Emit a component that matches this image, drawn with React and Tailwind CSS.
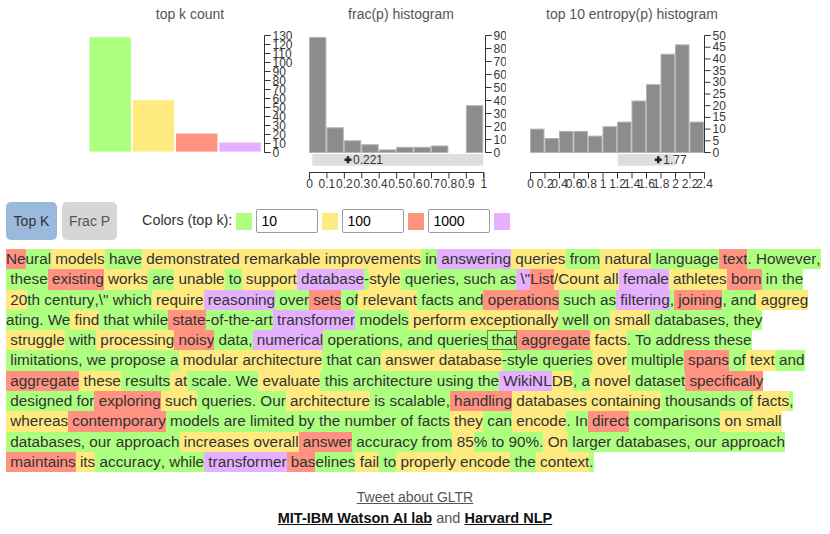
import React from "react";

const BG = {
  g: "bg-[#ADFF80]",
  y: "bg-[#FFEA80]",
  r: "bg-[#FF9280]",
  p: "bg-[#E5B0FF]",
  G: "bg-[#ADFF80] shadow-[inset_0_0_0_1px_#5f8f4a]",
};

// one string per rendered line, tokens split by "|", first char = colour code
const LINES = [
  "rNe|gural|y models|g have|y demonstrated|y remarkable|y improvements|g in|p answering|y queries|g from|y natural|g language|r text|g.|g However|g,",
  'g these|r existing|y works|g are|y unable|g to|y support|p database|g-|ystyle|g queries|g,|g such|g as|p \\"|rList|y/|yCount|y all|p female|y athletes|r born|g in|g the',
  'y 20|gth|g century|g,\\"|g which|y require|p reasoning|g over|r sets|g of|y relevant|g facts|g and|r operations|g such|g as|p filtering|g,|r joining|g,|g and|y aggreg',
  "gating|g.|g We|y find|g that|g while|r state|g-of-the-art|p transformer|g models|y perform|y exceptionally|g well|g on|y small|g databases|g,|g they",
  "y struggle|g with|y processing|r noisy|g data|g,|p numerical|g operations|g,|g and|g queries|G that|r aggregate|y facts|g.|g To|g address|g these",
  "g limitations|g,|g we|g propose|g a|y modular|y architecture|g that|g can|y answer|y database|g-|gstyle|g queries|y over|g multiple|r spans|g of|y text|g and",
  "r aggregate|y these|g results|y at|g scale|g.|g We|y evaluate|g this|g architecture|g using|g the|p Wiki|pNL|yDB|g,|g a|y novel|g dataset|r specifically",
  "g designed|g for|r exploring|y such|g queries|g.|g Our|y architecture|g is|g scalable|g,|r handling|y databases|y containing|g thousands|g of|y facts|g,",
  "y whereas|r contemporary|g models|g are|g limited|g by|g the|g number|g of|g facts|y they|g can|y encode|g.|g In|r direct|g comparisons|y on|y small",
  "g databases|g,|g our|g approach|y increases|y overall|r answer|g accuracy|g from|y 85|g%|g to|g 90|g%.|y On|g larger|g databases|g,|g our|g approach",
  "r maintains|y its|g accuracy|g,|g while|p transformer|r bas|gelines|y fail|g to|y properly|y encode|g the|y context|g.",
];

const LABEL = { fontFamily: "'Liberation Sans', Arial, sans-serif", fontSize: 12, fill: "#383838" };

function AxisRight({ x, base, scale, max, step }) {
  const ticks = [];
  for (let v = 0; v <= max; v += step) ticks.push(v);
  const top = base - max * scale;
  return (
    <g>
      <path d={`M${x + 6},${top}H${x}V${base}H${x + 6}`} stroke="#333" fill="none" />
      {ticks.map((v) => (
        <line key={v} x1={x} x2={x + 6} y1={base - v * scale} y2={base - v * scale} stroke="#333" />
      ))}
      {ticks.map((v) => (
        <text key={v} x={x + 8} y={base - v * scale} dy="0.34em" style={LABEL}>
          {v}
        </text>
      ))}
    </g>
  );
}

function AxisBottom({ x0, y, step, labels }) {
  const x1 = x0 + step * (labels.length - 1);
  return (
    <g>
      <path d={`M${x0},${y + 6}V${y}H${x1}V${y + 6}`} stroke="#333" fill="none" />
      {labels.map((l, i) => (
        <line key={i} x1={x0 + i * step} x2={x0 + i * step} y1={y} y2={y + 6} stroke="#333" />
      ))}
      {labels.map((l, i) => (
        <text key={"t" + i} x={x0 + i * step} y={y + 15} textAnchor="middle" style={LABEL}>
          {l}
        </text>
      ))}
    </g>
  );
}

function Summary({ from, to, cx, value }) {
  return (
    <g>
      <rect x={from} y={131} width={to - from} height={11.7} fill="#dedede" />
      <path d={`M${cx - 3.5},136.8h7M${cx},133.3v7`} stroke="#222" strokeWidth="2.6" />
      <text x={cx + 5} y={136.8} dy="0.34em" style={LABEL}>
        {value}
      </text>
    </g>
  );
}

function Column({ title, width, children }) {
  return (
    <div className="flex flex-col" style={{ width }}>
      <div className="text-center text-[14px] leading-[18px] text-[#555]">{title}</div>
      <svg width={width} height={172}>
        {children}
      </svg>
    </div>
  );
}

const TOPK = [
  [128, "#ADFF80"],
  [58, "#FFEA80"],
  [21, "#FF9280"],
  [11, "#E5B0FF"],
];
const FRAC = [88.5, 19, 9, 6, 2, 4, 4, 5, 0, 36];
const ENT = [10, 6, 9, 9, 7, 11, 13, 22, 29, 42, 46, 13];

function Charts() {
  return (
    <div className="flex pl-[84px] pt-[5px]">
      <Column title="top k count" width={212}>
        {TOPK.map(([v, c], i) => (
          <rect key={i} x={5 + i * 43.3} y={129 - v * 0.9} width={42.3} height={v * 0.9} fill={c} stroke="#fff" strokeWidth="0.8" />
        ))}
        <AxisRight x={180.5} base={129.5} scale={0.9} max={130} step={10} />
      </Column>

      <Column title="frac(p) histogram" width={210}>
        {FRAC.map((v, i) =>
          v > 0 ? (
            <rect key={i} x={13.5 + i * 17.43} y={129.5 - v * 1.3} width={16.4} height={v * 1.3} fill="#8c8c8c" stroke="#b4b4b4" />
          ) : null
        )}
        <AxisRight x={189.5} base={129.5} scale={1.3} max={90} step={10} />
        <Summary from={16.3} to={187.3} cx={52} value="0.221" />
        <AxisBottom x0={13.5} y={149.5} step={17.43} labels={["0", "0.1", "0.2", "0.3", "0.4", "0.5", "0.6", "0.7", "0.8", "0.9", "1"]} />
      </Column>

      <div className="w-[12px]" />

      <Column title="top 10 entropy(p) histogram" width={228}>
        {ENT.map((v, i) => (
          <rect key={i} x={12.5 + i * 14.5} y={129.5 - v * 2.34} width={13.5} height={v * 2.34} fill="#8c8c8c" stroke="#b4b4b4" />
        ))}
        <AxisRight x={186.5} base={129.5} scale={2.34} max={50} step={5} />
        <Summary from={99.7} to={157} cx={140.3} value="1.77" />
        <AxisBottom
          x0={12.5}
          y={149.5}
          step={14.5}
          labels={["0", "0.2", "0.4", "0.6", "0.8", "1", "1.2", "1.4", "1.6", "1.8", "2", "2.2", "2.4"]}
        />
      </Column>
    </div>
  );
}

function ColorInput({ value }) {
  return (
    <input
      readOnly
      value={value}
      className="h-[24px] w-[62px] rounded-[2px] border border-[#9a9a9a] bg-white px-[4px] text-[14px] text-black outline-none"
    />
  );
}

function Controls() {
  return (
    <div className="mt-[7px] flex h-[38px] items-center pl-[6px]">
      <button className="h-[38px] w-[51px] rounded-[5px] bg-[#9bb9dc] text-[14px] text-[#333]">Top K</button>
      <button className="ml-[5px] h-[38px] w-[55px] rounded-[5px] bg-[#d6d6d6] text-[14px] text-[#555]">Frac P</button>
      <span className="ml-[25px] text-[14.4px] text-[#333]">Colors (top k):</span>
      <div className="ml-[4px] flex items-center gap-[4px]">
        <span className="h-[17px] w-[16px] bg-[#ADFF80]" />
        <ColorInput value="10" />
        <span className="h-[17px] w-[16px] bg-[#FFEA80]" />
        <ColorInput value="100" />
        <span className="h-[17px] w-[16px] bg-[#FF9280]" />
        <ColorInput value="1000" />
        <span className="h-[17px] w-[16px] bg-[#E5B0FF]" />
      </div>
    </div>
  );
}

function TokenText() {
  return (
    <div className="mt-[9px] px-[6px] text-[15.3px] text-[#333]">
      {LINES.map((line, li) => (
        <div key={li} className="flex h-[20.3px]">
          {line.split("|").map((tok, ti) => (
            <span key={ti} className={`whitespace-pre leading-[20.3px] ${BG[tok[0]]}`}>
              {tok.slice(1)}
            </span>
          ))}
        </div>
      ))}
    </div>
  );
}

export default function App() {
  return (
    <div className="h-[534px] w-[830px] overflow-hidden bg-white font-['Liberation_Sans',Arial,sans-serif] text-[#333]">
      <Charts />
      <Controls />
      <TokenText />
      <div className="mt-[15px] text-center">
        <div className="text-[14px] leading-[21px] text-[#555]">
          <a className="underline">Tweet about GLTR</a>
        </div>
        <div className="text-[14.5px] leading-[21px] text-[#555]">
          <a className="font-bold text-[#111] underline">MIT-IBM Watson AI lab</a> and{" "}
          <a className="font-bold text-[#111] underline">Harvard NLP</a>
        </div>
      </div>
    </div>
  );
}
